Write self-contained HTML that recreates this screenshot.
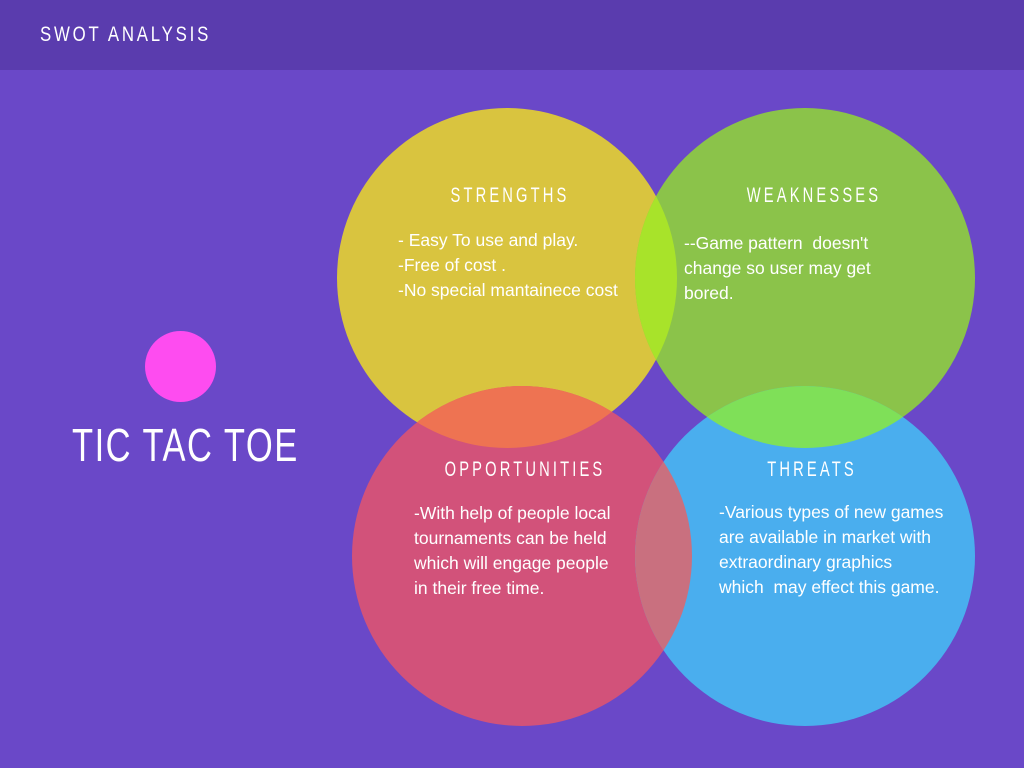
<!DOCTYPE html>
<html><head><meta charset="utf-8"><style>
html,body{margin:0;padding:0}
body{width:1024px;height:768px;background:#6a48c8;position:relative;overflow:hidden;font-family:"Liberation Sans",sans-serif;color:#fff}
.hdr{position:absolute;left:0;top:0;width:1024px;height:70px;background:#5a3cae}
.hdr span{position:absolute;left:40px;top:23px;font-size:21px;letter-spacing:3.5px;transform:scaleX(0.8);transform-origin:left center;white-space:nowrap}
svg{position:absolute;left:0;top:0}
.h{position:absolute;font-size:21px;letter-spacing:4.5px;text-align:center;width:300px;transform:scaleX(0.7);transform-origin:center}
.t{position:absolute;font-size:17.5px;line-height:25px;white-space:nowrap}
.title{position:absolute;left:72px;top:418px;font-size:46px;letter-spacing:2px;transform:scaleX(0.75);transform-origin:left center;white-space:nowrap}
.dot{position:absolute;left:145px;top:331px;width:71px;height:71px;border-radius:50%;background:#fe4cf0}
</style></head><body>
<div class="hdr"><span>SWOT ANALYSIS</span></div>
<svg width="1024" height="768">
<defs>
<clipPath id="cy"><circle cx="507" cy="278" r="170"/></clipPath>
<clipPath id="cg"><circle cx="805" cy="278" r="170"/></clipPath>
<clipPath id="cr"><circle cx="522" cy="556" r="170"/></clipPath>
<clipPath id="cb"><circle cx="805" cy="556" r="170"/></clipPath>
</defs>
<circle cx="507" cy="278" r="170" fill="#d9c43f"/>
<circle cx="805" cy="278" r="170" fill="#8bc34a"/>
<circle cx="522" cy="556" r="170" fill="#d2527a"/>
<circle cx="805" cy="556" r="170" fill="#4aaeee"/>
<circle cx="805" cy="278" r="170" fill="#a8e32a" clip-path="url(#cy)"/>
<circle cx="522" cy="556" r="170" fill="#ee7352" clip-path="url(#cy)"/>
<circle cx="805" cy="556" r="170" fill="#7fe058" clip-path="url(#cg)"/>
<circle cx="805" cy="556" r="170" fill="#c9707f" clip-path="url(#cr)"/>
</svg>
<div class="dot"></div>
<div class="title">TIC TAC TOE</div>
<div class="h" style="left:360px;top:184px">STRENGTHS</div>
<div class="h" style="left:664px;top:184px">WEAKNESSES</div>
<div class="h" style="left:375px;top:458px">OPPORTUNITIES</div>
<div class="h" style="left:662px;top:458px">THREATS</div>
<div class="t" style="left:398px;top:228px">- Easy To use and play.<br>-Free of cost .<br>-No special mantainece cost</div>
<div class="t" style="left:684px;top:231px">--Game pattern&nbsp; doesn't<br>change so user may get<br>bored.</div>
<div class="t" style="left:414px;top:501px">-With help of people local<br>tournaments can be held<br>which will engage people<br>in their free time.</div>
<div class="t" style="left:719px;top:500px">-Various types of new games<br>are available in market with<br>extraordinary graphics<br>which&nbsp; may effect this game.</div>
</body></html>
